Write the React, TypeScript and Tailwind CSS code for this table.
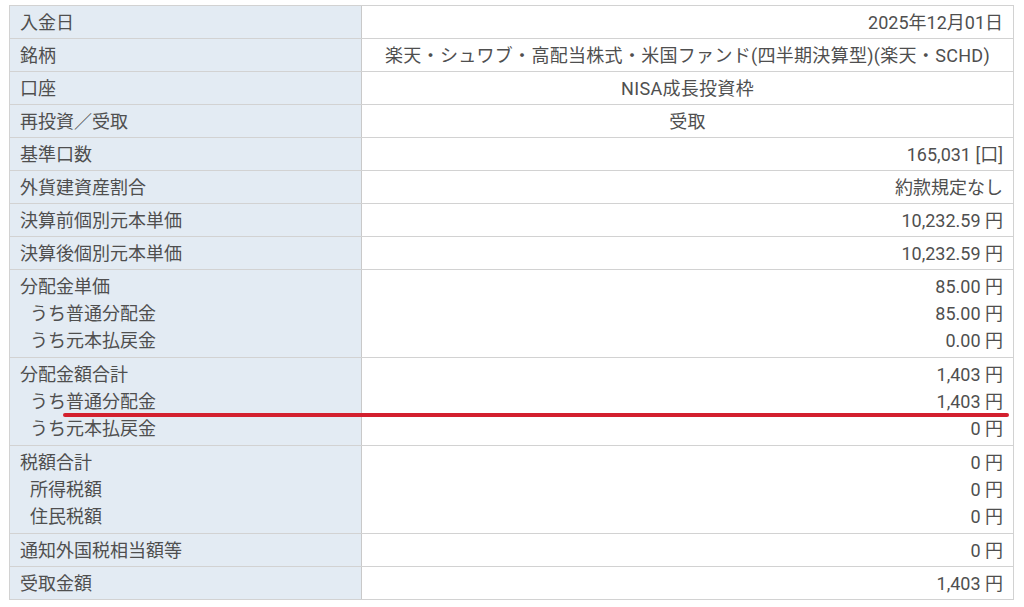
type Row = {
  labels: string[];
  values: string[];
  center?: boolean;
};

const rows: Row[] = [
  { labels: ["入金日"], values: ["2025年12月01日"] },
  { labels: ["銘柄"], values: ["楽天・シュワブ・高配当株式・米国ファンド(四半期決算型)(楽天・SCHD)"], center: true },
  { labels: ["口座"], values: ["NISA成長投資枠"], center: true },
  { labels: ["再投資／受取"], values: ["受取"], center: true },
  { labels: ["基準口数"], values: ["165,031 [口]"] },
  { labels: ["外貨建資産割合"], values: ["約款規定なし"] },
  { labels: ["決算前個別元本単価"], values: ["10,232.59 円"] },
  { labels: ["決算後個別元本単価"], values: ["10,232.59 円"] },
  { labels: ["分配金単価", "うち普通分配金", "うち元本払戻金"], values: ["85.00 円", "85.00 円", "0.00 円"] },
  { labels: ["分配金額合計", "うち普通分配金", "うち元本払戻金"], values: ["1,403 円", "1,403 円", "0 円"] },
  { labels: ["税額合計", "所得税額", "住民税額"], values: ["0 円", "0 円", "0 円"] },
  { labels: ["通知外国税相当額等"], values: ["0 円"] },
  { labels: ["受取金額"], values: ["1,403 円"] },
];

export default function App() {
  return (
    <div
      className="w-[1024px] h-[607px] bg-white text-[18px] leading-[27px] text-[#4f4f4f]"
      style={{ fontFamily: 'Roboto, "Noto Sans CJK JP", sans-serif' }}
    >
      <div className="relative ml-[9px] mt-[5px] w-[1005px] border-t border-l border-r border-[#d2d2d2]">
        {rows.map((row, i) => {
          const multi = row.labels.length > 1;
          return (
            <div key={i} className="grid grid-cols-[352px_1fr] border-b border-[#d2d2d2]">
              <div
                className={`bg-[#e3ebf3] border-r border-[#c9c9c9] pl-[10px] pt-[3px] ${multi ? "pb-[3px]" : "pb-[2px]"}`}
              >
                {row.labels.map((l, j) => (
                  <div key={j} className={j > 0 ? "pl-[10px]" : ""}>
                    {l}
                  </div>
                ))}
              </div>
              <div
                className={`pr-[10px] pt-[3px] ${multi ? "pb-[3px]" : "pb-[2px]"} ${row.center ? "text-center pl-[10px] tracking-[0.3px]" : "text-right"}`}
              >
                {row.values.map((v, j) => (
                  <div key={j}>{v}</div>
                ))}
              </div>
            </div>
          );
        })}
        {/* annotation line */}
        <div className="absolute left-[53px] top-[407px] w-[946px] h-[4px] rounded-full bg-[#d3202e]" />
      </div>
    </div>
  );
}
